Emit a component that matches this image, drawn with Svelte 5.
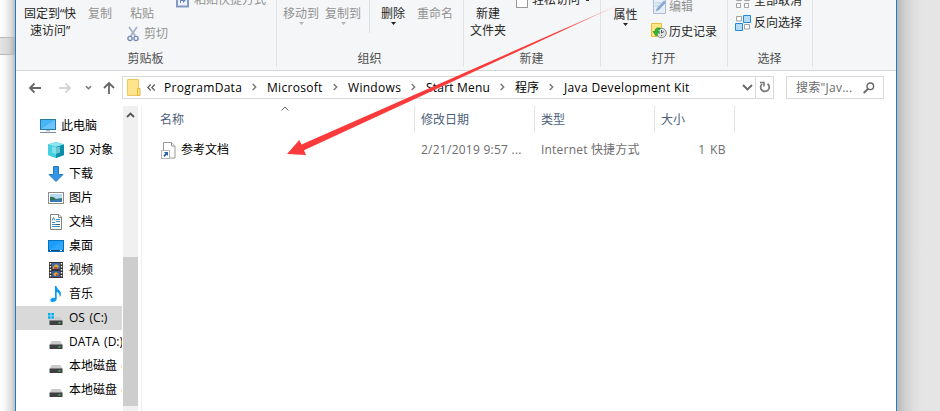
<script>
  const crumbs = [
    { t: 'ProgramData', w: 103, s: 0.3 },
    { t: 'Microsoft', w: 81, s: 0.3 },
    { t: 'Windows', w: 78, s: 0.3 },
    { t: 'Start Menu', w: 89, s: 0.2 },
    { t: '程序', w: 49, s: 0 },
    { t: 'Java Development Kit', w: 140, s: 0.35 }
  ];
  const tree = [
    { t: '3D 对象', i: 'cube' },
    { t: '下载', i: 'down' },
    { t: '图片', i: 'pic' },
    { t: '文档', i: 'doc' },
    { t: '桌面', i: 'desk' },
    { t: '视频', i: 'film' },
    { t: '音乐', i: 'note' },
    { t: 'OS (C:)', i: 'os', sel: true },
    { t: 'DATA (D:)', i: 'disk' },
    { t: '本地磁盘 (E:)', i: 'disk' },
    { t: '本地磁盘 (F:)', i: 'disk' }
  ];
</script>

{#snippet icon(name)}
  <svg class="ico" width="16" height="16" viewBox="0 0 16 16">
    {#if name === 'cube'}
      <path d="M0 2.500L8 0L16 2.500V13L8 16L0 13Z" fill="#20a9bd" />
      <path d="M0 2.500L8 0L16 2.500L8 5Z" fill="#8ce6ee" /><path d="M0 2.500L8 5V16L0 13Z" fill="#45cfdf" />
      <path d="M8 5L16 2.500V13L8 16Z" fill="#0d8ea8" /><path d="M4 4.500L8 5.500L12 4.500V10.500L8 12L4 10.500Z" fill="#b4f4f5" opacity=".55" />
    {:else if name === 'down'}
      <path d="M5.500 .5H10.500V8.500H15L8 15.500L1 8.500H5.500Z" fill="#3494e8" stroke="#2478be" />
    {:else if name === 'pic'}
      <rect x=".5" y="2.500" width="15" height="11" fill="#fff" stroke="#8c8c8c" />
      <rect x="2" y="4" width="12" height="8" fill="#b4dbf2" /><path d="M2 7Q5 6 8 9L14 8V12H2Z" fill="#32705e" /><path d="M2 10.500L14 9V12H2Z" fill="#387bb4" />
    {:else if name === 'doc'}
      <path d="M2.500 .5H11L13.500 3V15.500H2.500Z" fill="#fff" stroke="#858585" /><path d="M10.500 .5V3.500H13.500" fill="none" stroke="#858585" />
      <path d="M4 6.500L5.500 3.500L7 6.500M8 5.500H12M8 7.500H12M4 8.500H7M4 10.500H8M4 12.500H12" stroke="#398dc0" fill="none" /><path d="M8 10.500H12" stroke="#555" />
    {:else if name === 'desk'}
      <rect x=".5" y="2.500" width="15" height="11" fill="#1b9dfb" stroke="#0870ba" /><path d="M1 12L15 3V12Z" fill="#46b1ff" opacity=".5" /><path d="M1 12.500H15" stroke="#064c83" /><path d="M2 12.500H3M12 12.500H14" stroke="#fff" />
    {:else if name === 'film'}
      <rect x="1" y="0" width="14" height="16" fill="#333" /><path d="M2.500 1V16M13.500 1V16" stroke="#fff" stroke-width="1.400" stroke-dasharray="1.500 1.500" />
      <rect x="4" y="1" width="8" height="6" fill="#4269a9" /><rect x="4" y="9" width="8" height="6" fill="#345b9f" /><path d="M5 5L8 2L11 4L9 7H5ZM5 12L8 10L11 12V14H7Z" fill="#d9aa30" /><path d="M6 5H9V7H6ZM8 12H11V14H8Z" fill="#b84f46" />
    {:else if name === 'note'}
      <path d="M7 0H8.500C8.500 3 13 4 13 8Q13 10 11.500 11C12 8 10.500 6.500 8.700 6V13C8.700 15 6.500 16 4.500 16C2.500 16 1.800 14.500 2.500 13.300C3.400 11.700 5.500 11.300 7 12Z" fill="#0d9bf2" />
    {:else if name === 'mon'}
      <rect x=".5" y="1.500" width="15" height="10" fill="#48b5f4" stroke="#287ba8" /><path d="M1 11L15 2V11Z" fill="#8fd5ff" opacity=".5" /><path d="M6 12H10V13.500H6Z" fill="#a9c5d6" /><path d="M0 14.500H16" stroke="#7890a0" />
    {:else}
      {#if name === 'os'}<path d="M0 3H2.600V5.500H0ZM3.400 3H6V5.500H3.400ZM0 6.300H2.600V8.800H0ZM3.400 6.300H6V8.800H3.400Z" fill="#00adef" />{/if}
      <path d={name === 'os' ? 'M7 7H12.500L14.500 11H1.500V9.500H7Z' : 'M3.500 7H12.500L14.500 11H1.500Z'} fill="#cbcbce" />
      <rect x="1.500" y="10.500" width="13" height="4.500" fill="#3d3f40" /><rect x="10.500" y="12.300" width="2" height="1.200" fill="#41e64e" />
    {/if}
  </svg>
{/snippet}

{#snippet tri(c)}<svg class="tri" width="5" height="3" viewBox="0 0 5 3"><path d="M0 0H5L2.500 3Z" fill={c} /></svg>{/snippet}

<div class="screen">
  <div class="behind"><i></i></div>
  <main class="window">
    <section class="ribbon">
      <div class="group" style="width:261px">
        <div class="tools">
          <div class="big" style="width:68px">固定到“快<br />速访问”</div>
          <div class="big off" style="width:32px">复制</div>
          <div class="paste off">
            <div class="big" style="width:52px">粘贴</div>
            <div class="cut">
              <svg width="12" height="16" viewBox="0 0 12 16"><path d="M2 1L8.300 10M10 1L3.700 10" stroke="#a2b2c9" stroke-width="1.700" /><circle cx="3" cy="12.500" r="2.100" fill="none" stroke="#7389b4" stroke-width="1.400" /><circle cx="9" cy="12.500" r="2.100" fill="none" stroke="#7389b4" stroke-width="1.400" /></svg>
              剪切
            </div>
          </div>
          <div class="top off" style="margin-left:8px">
            <svg width="13" height="16" viewBox="0 0 13 16"><rect x="1" y="1" width="11" height="13.500" fill="#edf2fa" stroke="#8499c3" stroke-width="2" /><path d="M4 11V7H7V5L10 8L7 11V9H5V11Z" fill="#6684b9" /></svg>
            <span style="margin-left:5px">粘贴快捷方式</span>
          </div>
        </div>
        <div class="label">剪贴板</div>
      </div>
      <div class="group" style="width:187px">
        <div class="tools">
          <div class="big off" style="width:48px">移动到{@render tri('#b5b5b5')}</div>
          <div class="big off" style="width:36px">复制到{@render tri('#b5b5b5')}</div>
          <div class="inner"></div>
          <div class="big" style="width:46px">删除{@render tri('#222')}</div>
          <div class="big off" style="width:38px">重命名</div>
        </div>
        <div class="label">组织</div>
      </div>
      <div class="group" style="width:137px">
        <div class="tools">
          <div class="big" style="width:48px">新建<br />文件夹</div>
          <div class="top" style="margin-left:4px"><b class="box"></b><span style="margin-left:4px">轻松访问</span><span class="dot"></span></div>
        </div>
        <div class="label">新建</div>
      </div>
      <div class="group" style="width:127px">
        <div class="tools">
          <div class="big prop" style="width:48px">属性{@render tri('#222')}</div>
          <div class="stack">
            <div class="off">
              <svg width="19" height="18" viewBox="0 0 19 18"><path d="M3.500 .5H13L15.500 3V16.500H3.500Z" fill="#e7effa" stroke="#aebbd0" /><path d="M5 6H11M5 9H9" stroke="#b6c8df" /><path d="M5.500 14.500L7 11L14 3.500L16 5.500L9 13Z" fill="#8ca9d0" /></svg>编辑
            </div>
            <div>
              <svg width="19" height="18" viewBox="0 0 19 18"><path d="M1.500 1.500H11.500V14.500H1.500Z" fill="#ffe583" stroke="#e6bd37" /><circle cx="11.500" cy="11" r="4.800" fill="#dfe2e3" stroke="#828789" /><path d="M11.500 8V11L14 9.500M9 11H10M11.500 14V13" fill="none" stroke="#52585c" /><path d="M10 6Q5 5 5 9.500H3L6 14L9.500 9.500H7.500Q7.200 7.800 10 7.500Z" fill="#31b834" stroke="#168c25" stroke-width=".6" /></svg>历史记录
            </div>
          </div>
        </div>
        <div class="label">打开</div>
      </div>
      <div class="group" style="width:85px">
        <div class="tools">
          <div class="stack sel">
            <div><svg width="17" height="17" viewBox="0 0 17 17"><path d="M1.500 3.500H6.500V8.500H1.500ZM9.500 3.500H14.500V8.500H9.500ZM1.500 11.500H5.500V15.500H1.500ZM9.500 11.500H13.500V15.500H9.500Z" fill="#fff" stroke="#a1a1a1" /></svg>全部取消</div>
            <div><svg width="17" height="17" viewBox="0 0 17 17"><path d="M1.500 2.500H6.500V7H1.500ZM9.500 10.500H14.500V15H9.500Z" fill="#fff" stroke="#a1a1a1" /><path d="M8.500 1.500H15.500V8.500H8.500ZM.5 9.500H7.500V16.500H.5Z" fill="#b4dcfa" stroke="#2589d6" /></svg>反向选择</div>
          </div>
        </div>
        <div class="label">选择</div>
      </div>
    </section>

    <nav class="bar">
      <svg width="106" height="24" viewBox="0 0 106 24" fill="none">
        <path d="M25 12H14M18.500 7.500L14 12L18.500 16.500" stroke="#666" stroke-width="1.800" />
        <path d="M43 12H54M49.500 7.500L54 12L49.500 16.500" stroke="#d5d5d5" stroke-width="1.800" />
        <path d="M70 10.200L72.500 12.700L75 10.200" stroke="#777" stroke-width="1.600" />
        <path d="M93 18V7M88 12L93 7L98 12" stroke="#666" stroke-width="1.800" />
      </svg>
      <div class="address">
        <svg class="folder" width="14" height="17" viewBox="0 0 14 17"><path d="M.5 .5H11.500V16.500H.5Z" fill="#ffe48d" stroke="#edc95c" /><path d="M10.500 9.500H13V16.500H10.500Z" fill="#ffe48d" stroke="#e3b83e" /></svg>
        <svg class="back" width="9" height="7" viewBox="0 0 9 7" fill="none" stroke="#555" stroke-width="1.100"><path d="M3.700 .5L.8 3.500L3.700 6.500M7.700 .5L4.800 3.500L7.700 6.500" /></svg>
        {#each crumbs as c, i}
          <div class="crumb" style="width:{c.w}px;letter-spacing:{c.s}px"><span>{c.t}</span>
            {#if i < 5}<svg width="5" height="8" viewBox="0 0 5 8"><path d="M.7 1L3.700 4L.7 7" fill="none" stroke="#777" stroke-width="1.400" /></svg>{/if}
          </div>
        {/each}
        <svg class="chev" width="11" height="7" viewBox="0 0 11 7"><path d="M1 1L5.500 5.500L10 1" fill="none" stroke="#666" stroke-width="1.800" /></svg>
        <div class="refresh"><svg width="12" height="13" viewBox="0 0 12 13"><path d="M3.200 2.800A4.300 4.300 0 1 0 8.500 2.700" fill="none" stroke="#777" stroke-width="1.700" /><path d="M1 1.500H5V5.500" fill="none" stroke="#777" stroke-width="1.500" /></svg></div>
      </div>
      <div class="search"><span>搜索"Jav...</span><svg width="12" height="12" viewBox="0 0 12 12"><circle cx="7.300" cy="4.300" r="3.300" fill="none" stroke="#666" stroke-width="1.400" /><path d="M5 6.800L.7 11" stroke="#666" stroke-width="1.800" /></svg></div>
    </nav>

    <div class="body">
      <aside>
        <div class="row root">{@render icon('mon')}<span>此电脑</span></div>
        {#each tree as n}
          <div class="row" class:on={n.sel}>{@render icon(n.i)}<span>{n.t}</span></div>
        {/each}
      </aside>
      <div class="scroll"><svg width="9" height="6" viewBox="0 0 9 6"><path d="M1 5L4.500 1.500L8 5" fill="none" stroke="#555" stroke-width="1.800" /></svg><div class="thumb"></div></div>
      <section class="files">
        <div class="head">
          <div style="width:273px;padding-left:18px">名称<svg class="sort" width="8" height="5" viewBox="0 0 8 5"><path d="M.5 4.500L4 1L7.500 4.500" fill="none" stroke="#666" /></svg></div>
          <div style="width:120px">修改日期</div><div style="width:120px">类型</div><div style="width:80px">大小</div>
        </div>
        <div class="file">
          <svg width="15" height="17" viewBox="0 0 15 17"><path d="M2.500 .5H10.500L14 4V16H2.500Z" fill="#fff" stroke="#999" /><path d="M10.500 .5V4H14" fill="#eee" stroke="#999" /><rect x=".5" y="8.500" width="8" height="8" fill="#fff" stroke="#b7b7b7" /><path d="M3 10H7V14L5.800 12.800L3.500 15L2.200 13.800L4.300 11.400Z" fill="#2e65ad" /></svg>
          <span class="name">参考文档</span><span class="date">2/21/2019 9:57 ...</span><span class="type">Internet 快捷方式</span><span class="size">1 KB</span>
        </div>
      </section>
    </div>
  </main>
  <svg class="arrow" width="940" height="411" viewBox="0 0 940 411">
    <defs><linearGradient id="fade" gradientUnits="userSpaceOnUse" x1="622" y1="3" x2="560" y2="31"><stop offset="0" stop-color="#fb3b3b" stop-opacity=".25" /><stop offset="1" stop-color="#fb3b3b" /></linearGradient></defs>
    <path d="M287 154L299.300 140L301.500 144.500L621 3.800L304 150.300L306 155Z" fill="url(#fade)" />
  </svg>
</div>

<style>
  :global(body) { margin: 0; }
  .screen { position: relative; display: flex; width: 940px; height: 411px; overflow: hidden; background: linear-gradient(90deg, #b8b8b8 897px, #d0d0d0 905px, #dfdfdf 914px, #e5e5e5 922px); font: 12px/17px "Open Sans", "Noto Sans CJK SC", sans-serif; color: #111; }
  .screen * { box-sizing: border-box; }
  .screen svg { flex: none; }
  .behind { width: 15px; padding-top: 37px; background: linear-gradient(90deg, #fff 0, #f5f5f5 5px, #dfdfdf 11px, #bebebe 15px); }
  .behind i { display: block; height: 18px; border: solid #b9b9b9; border-width: 1px 0; background: linear-gradient(90deg, #e5e5e5, #d5d5d5 9px, #b0b0b0); }
  .window { width: 882px; height: 411px; border: solid #1e7dc8; border-width: 0 1px; background: #fff; white-space: nowrap; }
  .ribbon { display: flex; height: 71px; background: #f5f6f7; border-bottom: 1px solid #d5d6d7; color: #262626; }
  .group { height: 67px; border-right: 1px solid #e0e2e4; display: flex; flex-direction: column; flex: none; }
  .tools { display: flex; height: 50px; }
  .label { text-align: center; color: #505050; padding-right: 1px; }
  .big { padding-top: 5px; text-align: center; flex: none; }
  .off { color: #929292; }
  .tri { display: block; margin: 0 auto; }
  .cut { display: flex; gap: 5px; padding-left: 11px; margin-top: 3px; align-items: center; height: 17px; }
  .paste { width: 52px; }
  .top { display: flex; align-items: center; height: 17px; margin-top: -9px; }
  .inner { width: 1px; height: 33px; background: #dcdee0; margin-left: 8px; }
  .box { width: 12px; height: 12px; border: 1px solid #999; background: #fff; margin-top: 4px; }
  .dot { width: 3px; height: 2px; background: #333; margin-left: 6px; }
  .prop { padding-top: 6px; padding-left: 1px; }
  .stack { display: flex; flex-direction: column; gap: 7px; margin: -3px 0 0 1px; }
  .stack div { display: flex; align-items: center; height: 18px; }
  .stack.sel { margin: -9px 0 0 7px; gap: 4px; }
  .stack.sel div { gap: 2px; }
  .bar { display: flex; height: 35px; padding-top: 5px; }
  .address { display: flex; align-items: center; width: 652px; height: 23px; border: 1px solid #d9d9d9; }
  .folder { margin-left: 4px; }
  .back { margin: 0 8px 0 6px; }
  .crumb { display: flex; justify-content: space-between; align-items: center; padding: 0 10px 1px 0; flex: none; color: #000; }
  .chev { margin-left: auto; margin-right: 2px; }
  .refresh { width: 18px; height: 21px; border-left: 1px solid #d9d9d9; display: flex; align-items: center; justify-content: center; }
  .search { display: flex; align-items: center; justify-content: space-between; width: 98px; height: 23px; border: 1px solid #d9d9d9; margin-left: 12px; padding: 0 8px 0 9px; color: #6b6b6b; letter-spacing: .25px; }
  .body { display: flex; height: 305px; }
  aside { width: 106px; padding-top: 8px; overflow: hidden; color: #000; }
  .row { display: flex; align-items: center; gap: 5px; height: 24px; padding-left: 32px; word-spacing: 1.5px; }
  .row span { padding-bottom: 2px; }
  .root { padding-left: 24px; }
  .on { background: #d9d9d9; }
  .scroll { width: 15px; height: 305px; margin-left: 1px; background: #f0f0f0; display: flex; flex-direction: column; align-items: center; padding-top: 6px; }
  .thumb { width: 15px; height: 149px; margin-top: 139px; background: #cdcdcd; }
  .files { margin-left: 3px; border-left: 1px solid #eee; flex: 1; }
  .head { display: flex; height: 27px; color: #4c607a; }
  .head div { position: relative; border-right: 1px solid #e5e5e5; padding: 5px 0 0 6px; }
  .sort { position: absolute; left: 139px; top: 0; }
  .file { display: flex; align-items: center; margin-top: 8px; height: 18px; padding-left: 19px; color: #6d6d6d; }
  .file span { padding-bottom: 2px; flex: none; }
  .name { width: 245px; padding-left: 5px; color: #000; }
  .date { width: 120px; letter-spacing: .25px; }
  .type { width: 113px; letter-spacing: .2px; }
  .size { width: 72px; text-align: right; letter-spacing: .4px; word-spacing: 1px; }
  .arrow { position: absolute; left: 0; top: 0; }
</style>
